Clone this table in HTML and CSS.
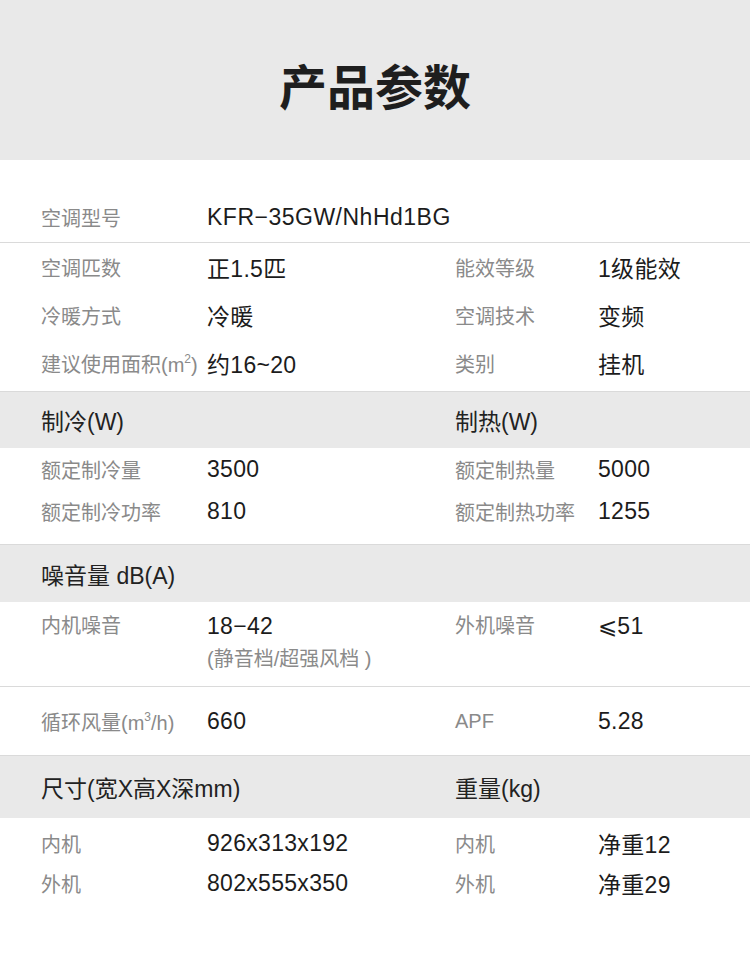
FILE: index.html
```html
<!DOCTYPE html>
<html lang="zh-CN">
<head>
<meta charset="utf-8">
<title>产品参数</title>
<link rel="stylesheet" href="styles.css">
</head>
<body>
<header class="hero"><h1 class="title">产品参数</h1></header>

<section class="block block-model">
  <div class="row row-model">
    <span class="lbl">空调型号</span><span class="val val-wide">KFR−35GW/NhHd1BG</span>
  </div>
</section>

<section class="block block-basic">
  <div class="row r48"><span class="lbl">空调匹数</span><span class="val">正1.5匹</span><span class="lbl">能效等级</span><span class="val">1级能效</span></div>
  <div class="row r48"><span class="lbl">冷暖方式</span><span class="val">冷暖</span><span class="lbl">空调技术</span><span class="val">变频</span></div>
  <div class="row r48"><span class="lbl nowrap">建议使用面积(m<sup>2</sup>)</span><span class="val">约16~20</span><span class="lbl">类别</span><span class="val">挂机</span></div>
</section>

<div class="band band-56"><span class="head">制冷(W)</span><span></span><span class="head">制热(W)</span><span></span></div>
<section class="block block-power">
  <div class="row r42"><span class="lbl">额定制冷量</span><span class="val">3500</span><span class="lbl">额定制热量</span><span class="val">5000</span></div>
  <div class="row r42"><span class="lbl">额定制冷功率</span><span class="val">810</span><span class="lbl">额定制热功率</span><span class="val">1255</span></div>
</section>

<div class="band band-57"><span class="head">噪音量 dB(A)</span></div>
<section class="block block-noise">
  <div class="row row-top"><span class="lbl">内机噪音</span><span class="val">18−42<span class="sub">(静音档/超强风档 )</span></span><span class="lbl">外机噪音</span><span class="val">⩽51</span></div>
</section>
<section class="block block-air">
  <div class="row r68"><span class="lbl nowrap">循环风量(m<sup>3</sup>/h)</span><span class="val">660</span><span class="lbl">APF</span><span class="val">5.28</span></div>
</section>

<div class="band band-62"><span class="head nowrap">尺寸(宽X高X深mm)</span><span></span><span class="head">重量(kg)</span><span></span></div>
<section class="block block-size">
  <div class="row r40"><span class="lbl">内机</span><span class="val">926x313x192</span><span class="lbl">内机</span><span class="val">净重12</span></div>
  <div class="row r40"><span class="lbl">外机</span><span class="val">802x555x350</span><span class="lbl">外机</span><span class="val">净重29</span></div>
</section>
</body>
</html>
```
FILE: styles.css
```css
* { box-sizing: border-box; }
html, body { margin: 0; padding: 0; background: #fff; }
body {
  width: 750px;
  height: 968px;
  overflow: hidden;
  font-family: "Liberation Sans", Arial, "Noto Sans CJK SC", sans-serif;
  color: #1c1c1c;
}

.hero {
  height: 160px;
  background: #e9e9e9;
  display: flex;
  align-items: center;
  justify-content: center;
  padding-top: 8px;
}
.title {
  margin: 0;
  font-family: "Noto Sans CJK SC", sans-serif;
  font-size: 48px;
  font-weight: 700;
  color: #1e1e1e;
  line-height: 1;
}

.row, .band {
  display: grid;
  grid-template-columns: 166px 248px 143px 1fr;
  padding-left: 41px;
  align-items: center;
}

.lbl {
  font-size: 20px;
  color: #8a8a8a;
  font-family: "Liberation Sans", "Noto Sans CJK SC", sans-serif;
}
.val {
  font-size: 23px;
  letter-spacing: 0.3px;
  color: #1c1c1c;
  white-space: nowrap;
}
.nowrap { white-space: nowrap; }
sup { font-size: 12px; vertical-align: 9px; line-height: 0; }

.block-model { padding-top: 33px; border-bottom: 1px solid #dadada; }
.row-model { height: 49px; }
.val-wide { letter-spacing: 0.5px; }

.block-basic { padding-bottom: 4px; border-bottom: 1px solid #dadada; }
.r48 { height: 48px; }

.band {
  background: #e9e9e9;
}
.head {
  font-size: 23px;
  color: #222;
}
.band-56 { height: 56px; }
.band-57 { height: 57px; }
.band-62 { height: 62px; }

.block-power { padding-bottom: 12px; border-bottom: 1px solid #dadada; }
.r42 { height: 42px; }

.block-noise { padding: 8px 0 10px; border-bottom: 1px solid #dadada; }
.row-top { align-items: start; line-height: 33px; }
.sub {
  display: block;
  font-size: 20px;
  letter-spacing: 0;
  color: #8a8a8a;
  white-space: nowrap;
}

.block-air { border-bottom: 1px solid #dadada; }
.r68 { height: 68px; }

.block-size { padding-top: 5px; }
.r40 { height: 40px; }
```
